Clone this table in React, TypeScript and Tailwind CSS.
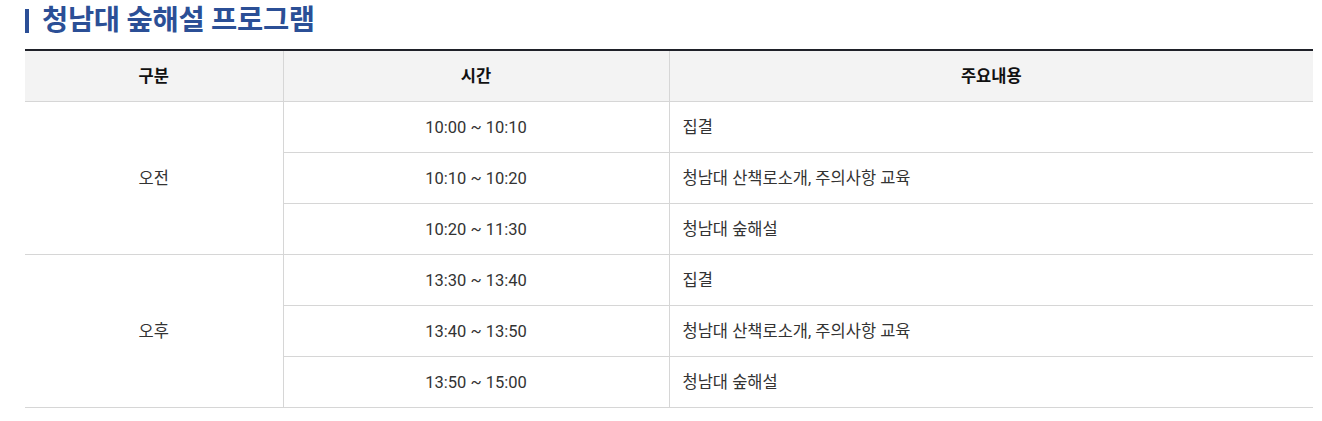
import React from "react";

const rows = [
  { time: "10:00 ~ 10:10", content: "집결" },
  { time: "10:10 ~ 10:20", content: "청남대 산책로소개, 주의사항 교육" },
  { time: "10:20 ~ 11:30", content: "청남대 숲해설" },
  { time: "13:30 ~ 13:40", content: "집결" },
  { time: "13:40 ~ 13:50", content: "청남대 산책로소개, 주의사항 교육" },
  { time: "13:50 ~ 15:00", content: "청남대 숲해설" },
];

export default function App() {
  const font = { fontFamily: 'Roboto, "Noto Sans CJK KR", sans-serif' };
  return (
    <div className="bg-white w-[1322px] h-[421px] pl-[25px] pr-[9px] pt-[5px]" style={font}>
      <h2 className="flex items-center h-[32px] text-[28.5px] font-bold text-[#2b4f96] tracking-[-0.3px]">
        <span className="w-[4px] h-[24px] bg-[#2b4f96] mr-[13px]" />
        청남대 숲해설 프로그램
      </h2>
      <table className="w-full mt-[12px] border-collapse border-t-2 border-t-[#1f2129] text-[16.5px] text-[#333]">
        <colgroup>
          <col className="w-[258px]" />
          <col className="w-[386px]" />
          <col />
        </colgroup>
        <thead>
          <tr className="h-[51px] bg-[#f3f3f3]">
            <th className="pt-[4px] font-bold text-[#111] border-b border-[#d6d6d6]">구분</th>
            <th className="pt-[4px] font-bold text-[#111] border-b border-l border-[#d6d6d6]">시간</th>
            <th className="pt-[4px] font-bold text-[#111] border-b border-l border-[#d6d6d6]">주요내용</th>
          </tr>
        </thead>
        <tbody>
          {rows.map((r, i) => (
            <tr key={i} className="h-[51px]">
              {i % 3 === 0 && (
                <td rowSpan={3} className="pt-[4px] text-center border-b border-[#d6d6d6]">
                  {i === 0 ? "오전" : "오후"}
                </td>
              )}
              <td className="pt-[4px] text-center border-b border-l border-[#d6d6d6]">{r.time}</td>
              <td className="pt-[4px] pl-[13px] border-b border-l border-[#d6d6d6]">{r.content}</td>
            </tr>
          ))}
        </tbody>
      </table>
    </div>
  );
}
